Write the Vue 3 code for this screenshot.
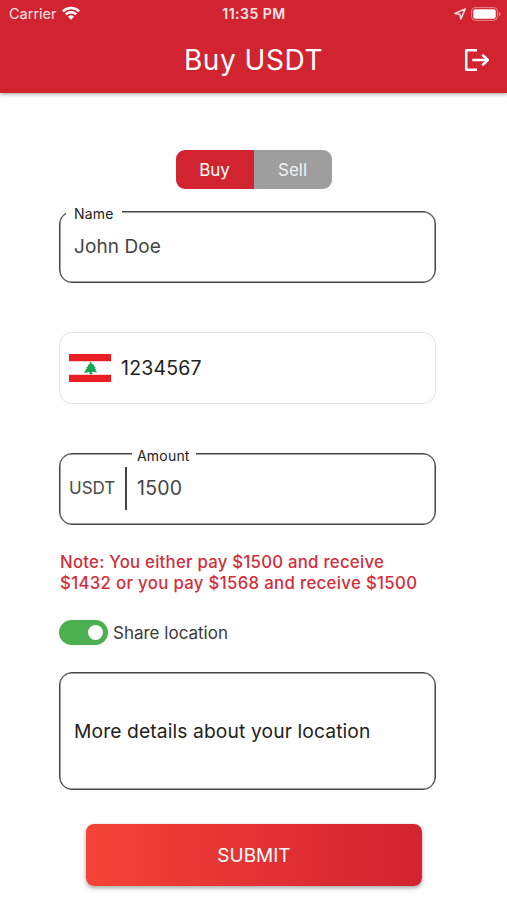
<template>
  <div class="screen">
    <header class="header">
      <div class="status-bar">
        <div class="status-left">
          <span class="carrier">Carrier</span>
          <svg class="wifi" width="18" height="14" viewBox="0 0 18 14" fill="none" stroke="#fff" stroke-width="2.5">
            <path d="M0.9 5.3a11.6 11.6 0 0 1 16.2 0"></path>
            <path d="M3.8 8.4a7.4 7.4 0 0 1 10.4 0"></path>
            <path d="M6 10.7a4.3 4.3 0 0 1 6 0L9 13.8z" fill="#fff" stroke="none"></path>
          </svg>
        </div>
        <span class="time">11:35 PM</span>
        <div class="status-right">
          <svg width="12" height="12" viewBox="0 0 12 12" fill="none" stroke="#fde9ea" stroke-width="1.4" stroke-linejoin="round">
            <path d="M11.2 0.9L1 5.5l4.9 0.7L6.8 11.1z"></path>
          </svg>
          <svg width="30" height="14" viewBox="0 0 30 14">
            <rect x="0.6" y="0.6" width="25.8" height="12.8" rx="4" fill="none" stroke="#fff" stroke-opacity="0.45"></rect>
            <rect x="2.3" y="2.3" width="22.4" height="9.4" rx="2" fill="#fff"></rect>
            <path d="M27.8 4.8v4.4a2.3 2.3 0 0 0 0-4.4z" fill="#fff" fill-opacity="0.5"></path>
          </svg>
        </div>
      </div>
      <div class="app-bar">
        <h1 class="title">Buy USDT</h1>
        <button class="logout-btn" aria-label="Logout">
          <svg width="26" height="24" viewBox="0 0 26 24" fill="none" stroke="#fff" stroke-width="2.5" stroke-linejoin="round">
            <path d="M13 2.2H2.2v19.6H13"></path>
            <path d="M8.3 12h15.5M18.3 6.6l5.5 5.4-5.5 5.4"></path>
          </svg>
        </button>
      </div>
    </header>

    <main class="form">
      <div class="mode-toggle">
        <button
          v-for="mode in modes"
          :key="mode"
          class="mode-button"
          :class="{ active: activeMode === mode }"
          @click="activeMode = mode"
        >
          {{ mode }}
        </button>
      </div>

      <div class="field name-field">
        <span class="field-label">Name</span>
        <span class="field-value">John Doe</span>
      </div>

      <div class="field phone-field">
        <svg class="flag" width="42" height="28" viewBox="0 0 42 28">
          <rect width="42" height="28" fill="#fff"></rect>
          <rect width="42" height="7.2" fill="#ec1c24"></rect>
          <rect y="20.8" width="42" height="7.2" fill="#ec1c24"></rect>
          <path
            d="M21 7.4l2 1.5-.7.5 3 1.8-1 .4 2.5 2-1.5.3 2.4 2.2-1.5.2 2.3 2.3-5.5-.9.6 2.6h-3.4l.5-2.4-6.4 1 2.7-2.3-1.2-.4 2.5-2-1.5-.3 2.6-2-.9-.5 2.8-1.8-.7-.6z"
            fill="#12a650"
          ></path>
        </svg>
        <span class="phone-value">1234567</span>
      </div>

      <div class="field amount-field">
        <span class="field-label">Amount</span>
        <span class="currency">USDT</span>
        <span class="divider"></span>
        <span class="field-value">1500</span>
      </div>

      <p class="note">
        <span class="note-first">Note: You either pay $1500 and receive</span><br>
        <span class="note-second">$1432 or you pay $1568 and receive $1500</span>
      </p>

      <div class="share-row">
        <button class="switch" :class="{ on: shareLocation }" aria-label="Share location" @click="shareLocation = !shareLocation">
          <span class="knob"></span>
        </button>
        <span class="share-label">Share location</span>
      </div>

      <div class="field details-field">
        <span class="details-text">More details about your location</span>
      </div>

      <button class="submit-btn">SUBMIT</button>
    </main>
  </div>
</template>

<script setup>
import { ref } from 'vue'

const modes = ['Buy', 'Sell']
const activeMode = ref('Buy')
const shareLocation = ref(true)
</script>

<style>
body {
  margin: 0;
  background: #fefefe;
}
</style>

<style scoped>
.screen {
  height: 900px;
  overflow: hidden;
  background: #fefefe;
  font-family: Inter, "Liberation Sans", sans-serif;
  color: #222;
}

.screen * {
  box-sizing: border-box;
}

button {
  padding: 0;
  border: none;
  background: transparent;
  font-family: inherit;
  cursor: pointer;
}

.header {
  height: 93px;
  background: #d22330;
  color: #fff;
  box-shadow: 0 1px 4px rgba(0, 0, 0, 0.4);
}

.status-bar {
  display: grid;
  grid-template-columns: 1fr auto 1fr;
  align-items: center;
  height: 27px;
  padding: 0 6px 0 9px;
  font-size: 14.5px;
}

.status-left,
.status-right {
  display: flex;
  align-items: center;
}

.status-left {
  gap: 5px;
  color: #fbe3e5;
}

.status-right {
  justify-content: flex-end;
  gap: 5px;
}

.wifi {
  margin-bottom: 1px;
}

.time {
  margin-right: 2px;
  font-size: 14px;
  font-weight: 600;
  letter-spacing: 0.5px;
  color: #fbe3e5;
}

.app-bar {
  display: grid;
  grid-template-columns: 1fr auto 1fr;
  align-items: center;
  height: 66px;
  padding: 0 17px;
}

.title {
  grid-column: 2;
  margin: 0;
  font-size: 28px;
  font-weight: 400;
  letter-spacing: 0.55px;
}

.logout-btn {
  display: flex;
  justify-self: end;
}

.form {
  display: flex;
  flex-direction: column;
  padding: 57px 71px 0 59px;
}

.mode-toggle {
  display: flex;
  align-self: center;
  width: 156px;
  height: 39px;
  margin-left: 12px;
  border-radius: 9px;
  overflow: hidden;
}

.mode-button {
  flex: 1;
  background: #9e9e9e;
  color: #f2f2f2;
  font-size: 17px;
}

.mode-button.active {
  background: #d22330;
  color: #fff;
}

.field {
  position: relative;
  display: flex;
  align-items: center;
  height: 72px;
  border: 1px solid #444;
  border-radius: 13px;
  box-shadow: inset 0 0 0 0.5px #444;
}

.field-label {
  position: absolute;
  top: -9px;
  padding: 0 8px;
  background: #fefefe;
  font-size: 14px;
  line-height: 22px;
  letter-spacing: 0.2px;
}

.field-value {
  font-size: 19px;
  color: #444;
}

.name-field {
  margin-top: 22px;
  padding: 0 14px 1px;
}

.name-field .field-value {
  letter-spacing: 0.1px;
}

.name-field .field-label {
  left: 6px;
}

.phone-field {
  margin-top: 49px;
  padding-left: 9px;
  border-color: #e2e2e2;
  box-shadow: none;
}

.phone-value {
  margin-left: 10px;
  font-size: 19.5px;
  letter-spacing: 0.2px;
}

.amount-field {
  margin-top: 49px;
  padding-left: 9px;
  padding-bottom: 2px;
}

.amount-field .field-label {
  left: 72px;
  padding: 0 6px 0 5px;
}

.amount-field .field-value {
  font-size: 19.5px;
  letter-spacing: 0.2px;
}

.currency {
  width: 46px;
  font-size: 17px;
  color: #4a4a4a;
}

.divider {
  width: 2px;
  height: 43px;
  margin: 0 10px;
  background: #444;
}

.note {
  margin: 27px 0 0 1px;
  font-size: 16.75px;
  font-weight: 500;
  line-height: 21px;
  color: #d22e3c;
  white-space: nowrap;
}

.note-first {
  letter-spacing: 0.25px;
}

.note-second {
  letter-spacing: 0.33px;
}

.share-row {
  display: flex;
  align-items: center;
  gap: 5px;
  margin-top: 26px;
}

.switch {
  display: flex;
  align-items: center;
  width: 49px;
  height: 25px;
  padding: 0 5px;
  border-radius: 13px;
  background: #9e9e9e;
}

.switch.on {
  justify-content: flex-end;
  background: #4caf50;
}

.knob {
  width: 15px;
  height: 15px;
  border-radius: 50%;
  background: #fff;
}

.share-label {
  font-size: 17px;
  color: #3a3a3a;
}

.details-field {
  height: 118px;
  margin-top: 27px;
  padding-left: 14px;
}

.details-text {
  font-size: 19.25px;
  letter-spacing: 0.11px;
  white-space: nowrap;
}

.submit-btn {
  height: 62px;
  margin: 34px 14px 0 27px;
  border-radius: 8px;
  background: linear-gradient(to right, #f44336, #d22331);
  box-shadow: 0 2px 4px rgba(0, 0, 0, 0.35);
  color: #fff;
  font-size: 19px;
}
</style>
